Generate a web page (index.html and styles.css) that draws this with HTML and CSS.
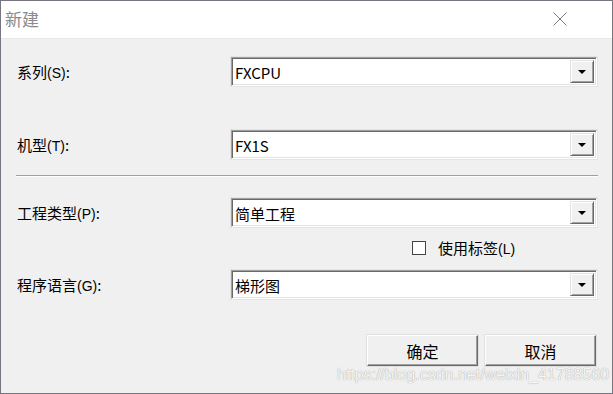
FILE: index.html
```html
<!DOCTYPE html>
<html lang="zh-CN">
<head>
    <meta charset="UTF-8">
    <title>新建</title>
    <link rel="stylesheet" href="styles.css">
</head>
<body>
    <div class="window">
        <div class="titlebar">
            <span class="title">新建</span>
            <svg class="close" width="14" height="14" viewBox="0 0 14 14">
                <path d="M0.5 0.5 L13.5 13.5 M13.5 0.5 L0.5 13.5" stroke="#7a7a7a" stroke-width="1" fill="none"/>
            </svg>
        </div>

        <div class="content">
            <div class="row row-first">
                <label class="field-label">系列<span class="key">(S)</span>:</label>
                <div class="combo"><span class="combo-text">FXCPU</span><span class="combo-btn"><i></i></span></div>
            </div>
            <div class="row row-second">
                <label class="field-label">机型<span class="key">(T)</span>:</label>
                <div class="combo"><span class="combo-text">FX1S</span><span class="combo-btn"><i></i></span></div>
            </div>

            <div class="separator"></div>

            <div class="row row-third">
                <label class="field-label">工程类型<span class="key">(P)</span>:</label>
                <div class="combo"><span class="combo-text">简单工程</span><span class="combo-btn"><i></i></span></div>
            </div>
            <div class="check-row">
                <span class="checkbox"></span>
                <span class="check-label">使用标签<span class="key">(L)</span></span>
            </div>
            <div class="row row-fourth">
                <label class="field-label">程序语言<span class="key">(G)</span>:</label>
                <div class="combo"><span class="combo-text">梯形图</span><span class="combo-btn"><i></i></span></div>
            </div>

            <div class="buttons">
                <button class="btn">确定</button>
                <button class="btn">取消</button>
            </div>
            <div class="watermark">https://blog.csdn.net/weixin_41788560</div>
        </div>
    </div>
</body>
</html>
```

FILE: styles.css
```css
html, body {
    margin: 0;
    padding: 0;
}
body {
    width: 613px;
    height: 394px;
    overflow: hidden;
    font-family: "Noto Sans CJK SC", "Liberation Sans", sans-serif;
    font-size: 15px;
    color: #000;
}
.window {
    width: 613px;
    height: 394px;
    box-sizing: border-box;
    border: 1px solid #77757f;
    background-color: #f0f0f0;
    display: flex;
    flex-direction: column;
}
.titlebar {
    height: 37px;
    background-color: #fff;
    border-bottom: 1px solid #e8e8e8;
    display: flex;
    align-items: center;
    justify-content: space-between;
    padding: 0 45px 0 4px;
}
.title {
    font-size: 17px;
    color: #8a8a8a;
    line-height: 1;
    margin-top: -2px;
}
.close {
    display: block;
    margin-top: -2px;
}
.content {
    position: relative;
    flex: 1;
    padding: 0 14px 0 16px;
}
.row {
    display: flex;
    align-items: center;
    height: 29px;
}
.row-first {
    margin-top: 18px;
}
.row-second {
    margin-top: 44px;
}
.row-third {
    margin-top: 21px;
}
.row-fourth {
    margin-top: 14px;
}
.field-label {
    width: 214px;
    line-height: 1;
}
.key {
    font-family: "Liberation Sans", sans-serif;
    font-size: 14px;
}
.combo {
    width: 366px;
    height: 29px;
    box-sizing: border-box;
    background-color: #fff;
    border-top: 1px solid #a0a0a0;
    border-left: 1px solid #a0a0a0;
    border-right: 1px solid #fff;
    border-bottom: 1px solid #fff;
    box-shadow: inset 1px 1px 0 #696969, inset -1px -1px 0 #e3e3e3, 0 0 0 1px #e4e4e4;
    display: flex;
    align-items: center;
    padding: 2px 2px 2px 3px;
}
.combo-text {
    flex: 1;
    line-height: 1;
    padding-top: 1px;
}
.combo-btn {
    width: 24px;
    height: 23px;
    box-sizing: border-box;
    background-color: #f0f0f0;
    border-top: 1px solid #e3e3e3;
    border-left: 1px solid #e3e3e3;
    border-right: 1px solid #696969;
    border-bottom: 1px solid #696969;
    box-shadow: inset 1px 1px 0 #fff, inset -1px -1px 0 #a0a0a0;
    display: flex;
    align-items: center;
    justify-content: center;
}
.combo-btn i {
    width: 0;
    height: 0;
    border-left: 4px solid transparent;
    border-right: 4px solid transparent;
    border-top: 4px solid #000;
    margin-top: 1px;
}
.separator {
    margin-top: 16px;
    height: 1px;
    background-color: #a0a0a0;
    border-bottom: 1px solid #fff;
    margin-left: -1px;
}
.check-row {
    display: flex;
    align-items: center;
    margin: 12px 0 0 395px;
    height: 17px;
}
.checkbox {
    width: 14px;
    height: 14px;
    box-sizing: border-box;
    background-color: #fff;
    border: 1px solid #444;
    margin-right: 12px;
}
.check-label {
    line-height: 1;
}
.buttons {
    display: flex;
    justify-content: flex-end;
    gap: 7px;
    margin-top: 36px;
    margin-right: 2px;
}
.btn {
    width: 111px;
    height: 31px;
    box-sizing: border-box;
    background-color: #f0f0f0;
    border-top: 1px solid #fff;
    border-left: 1px solid #fff;
    border-right: 1px solid #696969;
    border-bottom: 1px solid #696969;
    box-shadow: inset -1px -1px 0 #a0a0a0, 0 0 0 1px #e0e0e0;
    font-family: "Noto Sans CJK SC", sans-serif;
    font-size: 16px;
    color: #000;
    padding: 0;
    line-height: 1;
}
.watermark {
    position: absolute;
    left: 336px;
    top: 327px;
    font-family: "Liberation Sans", sans-serif;
    font-size: 16px;
    color: #f6f6f6;
    text-shadow: 0 0 1px #8a8a8a;
    white-space: nowrap;
}
```
